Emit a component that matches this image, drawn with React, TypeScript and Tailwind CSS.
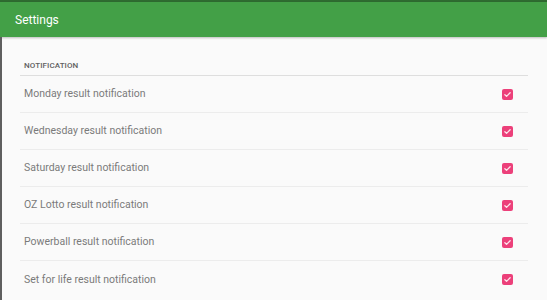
import React from 'react';

const items = [
  'Monday result notification',
  'Wednesday result notification',
  'Saturday result notification',
  'OZ Lotto result notification',
  'Powerball result notification',
  'Set for life result notification',
];

const CheckBox: React.FC = () => (
  <div className="w-[11px] h-[11px] rounded-[2px] bg-[#ec407a] flex items-center justify-center">
    <svg width="9" height="9" viewBox="0 0 24 24" fill="none" stroke="#fde4ec" strokeWidth="3.5" strokeLinecap="round" strokeLinejoin="round">
      <path d="M5 12.5l4.5 4.5L19 7.5" />
    </svg>
  </div>
);

const App: React.FC = () => {
  return (
    <div className="w-[547px] h-[300px] overflow-hidden bg-[#fafafa] font-['Roboto',sans-serif]">
      <div className="h-[2px] bg-[#2e6b30]" />
      <div className="h-[35px] bg-[#43a047] flex items-center px-[15px] shadow-[0_1px_2px_rgba(0,0,0,0.25)]">
        <span className="text-white text-[12px]">Settings</span>
      </div>
      <div className="h-[263px] border-l-2 border-[#5f5f5f] pl-[18px] pr-[19px]">
        <div className="pt-[23px] border-b-[1.5px] border-[#dedede] pb-[3px]">
          <div className="pl-[4px] text-[8px] font-medium text-[#5f5f5f] tracking-[0.1px]">NOTIFICATION</div>
        </div>
        {items.map((t, i) => (
          <div
            key={i}
            className={`h-[37px] flex items-center justify-between pl-[4px] pr-[15px] ${i < items.length - 1 ? 'border-b border-[#ececec]' : ''}`}
          >
            <span className="text-[10.5px] text-[#7a7a7a]">{t}</span>
            <CheckBox />
          </div>
        ))}
      </div>
    </div>
  );
};

export default App;
